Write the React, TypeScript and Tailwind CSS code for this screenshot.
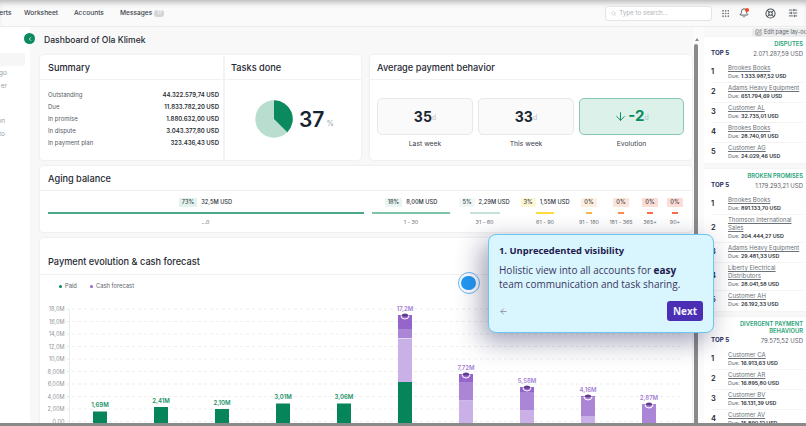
import {
  ArrowDown,
  ArrowLeft,
  Bell,
  ChevronLeft,
  Grip,
  LifeBuoy,
  Search,
  SlidersHorizontal,
  SquarePen,
} from "lucide-react";

const summaryRows = [
  ["Outstanding", "44.322.579,74 USD"],
  ["Due", "11.833.782,20 USD"],
  ["In promise", "1.880.632,00 USD"],
  ["In dispute", "3.043.377,80 USD"],
  ["In payment plan", "323.436,43 USD"],
];

const agingColumns = [
  { pct: "73%", amount: "32,5M USD", label: "...0", col: "ml-[7.5px] w-[316px]", bar: "w-full bg-[#4aa888]", badge: "bg-[#e2f2ec]" },
  { pct: "18%", amount: "8,00M USD", label: "1 - 30", col: "ml-[8.5px] w-[78px]", bar: "w-full bg-[#7cc4a6]", badge: "bg-[#e8f5f0]" },
  { pct: "5%", amount: "2,29M USD", label: "31 - 60", col: "ml-[9px] w-[51px]", bar: "w-[30px] bg-[#c3e3d6]", badge: "bg-[#f0f8f5]" },
  { pct: "3%", amount: "1,55M USD", label: "61 - 90", col: "ml-[10px] w-[50px]", bar: "w-[18px] bg-[#fbdc3c]", badge: "bg-[#fdf7d4]" },
  { pct: "0%", amount: "", label: "91 - 180", col: "ml-[7px] w-[24px]", bar: "w-[6px] bg-[#fdb44b]", badge: "bg-[#fdeedd]" },
  { pct: "0%", amount: "", label: "181 - 365", col: "ml-[7px] w-[26px]", bar: "w-[6px] bg-[#fb8c4a]", badge: "bg-[#fde4d9]" },
  { pct: "0%", amount: "", label: "365+", col: "ml-[3px] w-[26px]", bar: "w-[6px] bg-[#fb6a4a]", badge: "bg-[#fddcd6]" },
  { pct: "0%", amount: "", label: "90+", col: "ml-[-1px] w-[26px]", bar: "w-[6px] bg-[#fb6a4a]", badge: "bg-[#fddcd6]" },
];

const topLists = [
  {
    title: ["DISPUTES"],
    total: "2.071.287,59 USD",
    rows: [
      ["Brookes Books", "1.333.987,52 USD"],
      ["Adams Heavy Equipment", "651.794,69 USD"],
      ["Customer AL", "32.735,01 USD"],
      ["Brookes Books", "28.740,91 USD"],
      ["Customer AG", "24.029,46 USD"],
    ],
  },
  {
    title: ["BROKEN PROMISES"],
    total: "1.179.293,21 USD",
    rows: [
      ["Brookes Books", "891.133,70 USD"],
      ["Thomson International Sales", "204.444,27 USD"],
      ["Adams Heavy Equipment", "29.481,33 USD"],
      ["Liberty Electrical Distributors", "28.041,58 USD"],
      ["Customer AH", "26.192,33 USD"],
    ],
  },
  {
    title: ["DIVERGENT PAYMENT", "BEHAVIOUR"],
    total: "79.575,52 USD",
    rows: [
      ["Customer CA", "16.913,63 USD"],
      ["Customer AR", "16.895,80 USD"],
      ["Customer BV", "16.131,39 USD"],
      ["Customer AV", "15.890,12 USD"],
    ],
  },
];

const GREEN = "#07855a";
const DARK = "#9565cc";
const MID = "#ab86d6";
const LIGHT = "#c9b0e6";

// y values are in page coordinates, svg starts at page y=295
const bars = [
  { label: "1,69M", tone: GREEN, parts: [[411.5, 426, GREEN]] },
  { label: "2,41M", tone: GREEN, parts: [[407, 426, GREEN]] },
  { label: "2,10M", tone: GREEN, parts: [[409, 426, GREEN]] },
  { label: "3,01M", tone: GREEN, parts: [[403.5, 426, GREEN]] },
  { label: "3,06M", tone: GREEN, parts: [[403.5, 426, GREEN]] },
  { label: "17,2M", tone: DARK, parts: [[315, 329, DARK], [329, 338, MID], [338.5, 382, LIGHT], [382, 426, GREEN]] },
  { label: "7,72M", tone: DARK, parts: [[374, 382, DARK], [382, 400.5, MID], [400.5, 426, LIGHT]] },
  { label: "5,58M", tone: DARK, parts: [[387, 392, DARK], [392, 410, MID], [410, 426, LIGHT]] },
  { label: "4,16M", tone: DARK, parts: [[396, 397.5, DARK], [397.5, 416, MID], [416, 426, LIGHT]] },
  { label: "2,87M", tone: DARK, parts: [[404, 426, MID]] },
] as { label: string; tone: string; parts: [number, number, string][] }[];

const axis = ["18,0M", "16,0M", "14,0M", "12,0M", "10,0M", "8,00M", "6,00M", "4,00M", "2,00M", "0,00"];

function Chart() {
  const top = 295;
  return (
    <svg width="652" height="135" viewBox={`40 ${top} 652 135`} className="block">
      {axis.map((t, i) => {
        const y = 309 + i * 12.5;
        return (
          <g key={t}>
            <text x="64.5" y={y + 2.2} textAnchor="end" fontSize="5.6" fill="#8f949b" fontFamily="Inter, sans-serif">
              {t}
            </text>
            <line x1="66" x2="680" y1={y} y2={y} stroke="#e9e9e9" strokeWidth="0.8" strokeDasharray="3 3" />
          </g>
        );
      })}
      <line x1="69.5" x2="69.5" y1="309" y2="424" stroke="#e6e6e6" strokeWidth="0.8" />
      {bars.map((b, i) => {
        const x = 93 + i * 61;
        const barTop = b.parts[0][0];
        return (
          <g key={b.label}>
            <text
              x={x + 7}
              y={barTop - 4.5}
              textAnchor="middle"
              fontSize="6"
              fontWeight="600"
              fill={b.tone === GREEN ? "#1a9268" : "#a37fd6"}
              fontFamily="Inter, sans-serif"
            >
              {b.label}
            </text>
            {b.parts.map(([y1, y2, color]) => (
              <rect key={y1} x={x} y={y1} width="14" height={y2 - y1} fill={color} />
            ))}
            {b.tone !== GREEN && (
              <>
                <path d={`M${x + 3} ${barTop + 0.5} a4 3.5 0 0 0 8 0`} fill="none" stroke="#fff" strokeWidth="1" />
                <ellipse cx={x + 7} cy={barTop} rx="3" ry="1.6" fill="#5d3b8f" />
              </>
            )}
          </g>
        );
      })}
    </svg>
  );
}

function Sidebar() {
  return (
    <aside className="flex w-[30px] shrink-0 flex-col bg-white pt-[26px] text-[6.5px] text-[#9aa0a6]">
      <div className="h-[12.5px] w-[25px] rounded-r-[2px] bg-[#f6f6f6]" />
      <div className="mt-[2px] flex h-[13px] items-center justify-end pr-[23px]">go</div>
      <div className="flex h-[13px] items-center justify-end pr-[23px]">er</div>
      <div className="h-[22px]" />
      <div className="flex h-[13px] items-center justify-end pr-[25px]">on</div>
      <div className="flex h-[13px] items-center justify-end pr-[25px]">to</div>
    </aside>
  );
}

function CardTitle({ children, className }: { children: React.ReactNode; className?: string }) {
  return (
    <div className={`flex h-[25px] items-center border-b border-[#f1f1f1] pt-[1.5px] text-[9.2px] font-medium text-[#1f2933] ${className ?? ""}`}>
      {children}
    </div>
  );
}

function SummaryCard() {
  return (
    <div className="flex h-[105px] w-[321px] rounded-[4px] bg-white shadow-[0_0_3px_rgba(0,0,0,0.08)]">
      <div className="w-[185px] border-r-2 border-[#f3f3f3]">
        <CardTitle className="pl-[8px]">Summary</CardTitle>
        <div className="flex flex-col pl-[8px] pr-[4px] pt-[8.5px]">
          {summaryRows.map(([label, value]) => (
            <div key={label} className="flex h-[12px] items-center justify-between text-[6px]">
              <span className="text-[#555c64]">{label}</span>
              <span className="font-semibold text-[#2b3138]">{value}</span>
            </div>
          ))}
        </div>
      </div>
      <div className="flex-1">
        <CardTitle className="pl-[6px]">Tasks done</CardTitle>
        <div className="flex items-center pl-[30px] pt-[20px]">
          <svg width="38" height="38" viewBox="0 0 38 38">
            <circle cx="19" cy="19" r="18.7" fill="#b9decf" />
            <path d="M19 19 V0.3 A18.7 18.7 0 0 1 32.3 32.2 Z" fill="#0a8a5e" />
          </svg>
          <span className="ml-[6px] text-[21px] font-semibold leading-none text-[#152430]">37</span>
          <span className="ml-[2px] mt-[9px] text-[7.5px] text-[#a0a6ab]">%</span>
        </div>
      </div>
    </div>
  );
}

function PaymentBehaviorCard() {
  return (
    <div className="h-[105px] w-[322px] rounded-[4px] bg-white shadow-[0_0_3px_rgba(0,0,0,0.08)]">
      <CardTitle className="pl-[7px]">Average payment behavior</CardTitle>
      <div className="flex pl-[7px] pt-[18px]">
        <div className="flex w-[96px] flex-col items-center">
          <div className="flex h-[36.5px] w-full items-center justify-center rounded-[5px] border border-[#e8e8e8] bg-[#fafafa]">
            <span className="text-[14px] font-bold text-[#1c2730]">35</span>
            <span className="mt-[4px] text-[7px] text-[#c0c4c8]">d</span>
          </div>
          <span className="mt-[4px] text-[6.8px] text-[#3c444c]">Last week</span>
        </div>
        <div className="ml-[5px] flex w-[96px] flex-col items-center">
          <div className="flex h-[36.5px] w-full items-center justify-center rounded-[5px] border border-[#e8e8e8] bg-[#fafafa]">
            <span className="text-[14px] font-bold text-[#1c2730]">33</span>
            <span className="mt-[4px] text-[7px] text-[#c0c4c8]">d</span>
          </div>
          <span className="mt-[4px] text-[6.8px] text-[#3c444c]">This week</span>
        </div>
        <div className="ml-[5px] flex w-[105px] flex-col items-center">
          <div className="flex h-[37px] w-full items-center justify-center rounded-[5px] border-[1.5px] border-[#86c9ae] bg-[#dcf1e9]">
            <ArrowDown size={13} strokeWidth={1.8} className="text-[#0a8a5e]" />
            <span className="ml-[1px] text-[15px] font-bold text-[#0a8a5e]">-2</span>
            <span className="mt-[4px] text-[7px] text-[#a9c9bc]">d</span>
          </div>
          <span className="mt-[3.5px] text-[6.8px] text-[#3c444c]">Evolution</span>
        </div>
      </div>
    </div>
  );
}

function AgingCard() {
  return (
    <div className="mt-[6px] h-[66px] w-[652px] rounded-[4px] bg-white shadow-[0_0_3px_rgba(0,0,0,0.08)]">
      <CardTitle className="pl-[8px]">Aging balance</CardTitle>
      <div className="flex pt-[7px]">
        {agingColumns.map((c) => (
          <div key={c.label} className={`flex shrink-0 flex-col items-center ${c.col}`}>
            <div className="flex h-[9px] items-center gap-[4px] whitespace-nowrap text-[5.7px]">
              <span className={`flex h-[8.5px] items-center rounded-[1px] px-[3px] font-medium text-[#3c444c] ${c.badge}`}>
                {c.pct}
              </span>
              {c.amount && <span className="font-medium text-[#2b3138]">{c.amount}</span>}
            </div>
            <div className={`mt-[4.5px] h-[2.5px] ${c.bar}`} />
            <span className="mt-[3.5px] whitespace-nowrap text-[5.4px] leading-[8px] text-[#6b7178]">{c.label}</span>
          </div>
        ))}
      </div>
    </div>
  );
}

function ForecastCard() {
  return (
    <div className="mt-[6px] w-[652px] rounded-t-[4px] bg-white shadow-[0_0_3px_rgba(0,0,0,0.08)]">
      <div className="flex h-[37px] items-end border-b border-[#f1f1f1] pb-[5px] pl-[8px] text-[9.2px] font-medium leading-[14px] text-[#1f2933]">
        Payment evolution &amp; cash forecast
      </div>
      <div className="flex h-[20px] items-center pl-[19px] pt-[3px] text-[5.8px] text-[#5d646b]">
        <span className="h-[3px] w-[3px] rounded-full bg-[#07855a]" />
        <span className="ml-[3px]">Paid</span>
        <span className="ml-[13px] h-[3px] w-[3px] rounded-full bg-[#9565cc]" />
        <span className="ml-[3px]">Cash forecast</span>
      </div>
      <Chart />
    </div>
  );
}

function TopList({ list }: { list: (typeof topLists)[number] }) {
  return (
    <section className="mb-[6px] bg-white pl-[7px] pr-[3px] pt-[3px] shadow-[0_0_2px_rgba(0,0,0,0.06)]">
      <div className="text-right text-[5.8px] font-semibold leading-[7px] text-[#27a377]">
        {list.title.map((t) => (
          <div key={t}>{t}</div>
        ))}
      </div>
      <div className="mt-[2px] flex h-[9px] items-center justify-between">
        <span className="text-[6.2px] font-bold text-[#1c2a5c]">TOP 5</span>
        <span className="text-[6px] text-[#5d646b]">{list.total}</span>
      </div>
      <div className="mt-[5px]">
        {list.rows.map(([name, due], i) => (
          <div key={name + i} className="flex items-center border-b border-[#f3f3f3] py-[1.5px] last:border-b-transparent">
            <span className="w-[17px] shrink-0 text-[7.5px] font-semibold text-[#1f2933]">{i + 1}</span>
            <div className="min-w-0 flex-1">
              <div className="text-[6px] leading-[8px] text-[#6b7178] underline">{name}</div>
              <div className="whitespace-nowrap text-[5.3px] leading-[8px] text-[#6b7178]">
                Due: <span className="font-semibold text-[#2b3138]">{due}</span>
              </div>
            </div>
          </div>
        ))}
      </div>
    </section>
  );
}

function TopPanel() {
  return (
    <aside className="relative w-[102px] shrink-0 overflow-hidden bg-[#f8f8f8] pt-[9.5px]">
      <div className="absolute right-0 top-[0.5px] z-10 flex h-[9px] w-[54px] items-center gap-[2px] whitespace-nowrap rounded-l-[2px] bg-[#ececec] pl-[3px] text-[5.6px] text-[#5d646b]">
        <SquarePen size={7} className="shrink-0" />
        Edit page lay-out
      </div>
      {topLists.map((list) => (
        <TopList key={list.total} list={list} />
      ))}
    </aside>
  );
}

function Tour() {
  return (
    <>
      <div className="absolute left-[457.5px] top-[272px] flex h-[22px] w-[22px] items-center justify-center rounded-full border-[1.5px] border-[#6bb8f0] bg-white">
        <div className="h-[14.5px] w-[14.5px] rounded-full bg-[#2299f5]" />
      </div>
      <div className="absolute left-[488px] top-[234px] h-[99px] w-[226px] rounded-[8px] border-[1.5px] border-[#6cc5ef] bg-[#d9f5fe] pl-[10px] pr-[10px] pt-[9px] font-['Open_Sans',sans-serif] shadow-[-6px_8px_26px_rgba(40,40,90,0.45)]">
        <div className="text-[9.4px] font-bold leading-[14px] text-[#1f1a4d]">1. Unprecedented visibility</div>
        <p className="mt-[5px] text-[10px] leading-[14px] text-[#3a3560]">
          Holistic view into all accounts for <b className="text-[#1f1a4d]">easy</b>
          <br />
          team communication and task sharing.
        </p>
        <div className="mt-[10px] flex items-center justify-between">
          <ArrowLeft size={9} strokeWidth={2.4} className="text-[#8f92a8]" />
          <button className="h-[20px] w-[36px] rounded-[3px] bg-[#4a2fb5] text-[10px] font-bold text-[#f0eefc]">Next</button>
        </div>
      </div>
    </>
  );
}

export default function App() {
  return (
    <div className="relative flex h-[426px] w-[806px] flex-col overflow-hidden bg-[#f8f8f8] font-['Inter',sans-serif]">
      <header className="flex h-[27px] shrink-0 items-center border-b border-[#ececec] bg-[#fafafa] shadow-[inset_0_6px_6px_-4px_rgba(0,0,0,0.3)]">
        <nav className="flex items-center pt-[1px] text-[6.6px] font-medium text-[#3c444c]">
          <span className="ml-[-7px] w-[31px]">Alerts</span>
          <span className="w-[50px]">Worksheet</span>
          <span className="w-[46px]">Accounts</span>
          <span>Messages</span>
          <span className="ml-[2px] flex h-[7px] w-[10px] items-center justify-center rounded-[3px] bg-[#d4d4d4] text-[4.5px] text-white">17</span>
        </nav>
        <div className="ml-[441px] flex h-[15px] w-[107px] items-center rounded-[3px] border border-[#e4e4e4] bg-white pl-[5px] text-[6.2px] text-[#b0b4b9]">
          <Search size={5} className="mr-[3px]" />
          Type to search...
        </div>
        <Grip size={9} strokeWidth={2} className="ml-[9px] text-[#5d646b]" />
        <div className="relative ml-[9px]">
          <Bell size={10} className="text-[#3c444c]" />
          <span className="absolute right-[0px] top-0 h-[4px] w-[4px] rounded-full bg-[#ef4a24]" />
        </div>
        <LifeBuoy size={11} strokeWidth={2.2} className="ml-[15.5px] text-[#4a5058]" />
        <SlidersHorizontal size={10} className="ml-[12px] text-[#4a5058]" />
      </header>
      <div className="flex min-h-0 flex-1">
        <Sidebar />
        <main className="min-w-0 flex-1 overflow-hidden pl-[10px]">
          <div className="flex h-[28px] items-center pb-[1px] pl-[4px] text-[8.6px] font-medium text-[#1f2933]">
            Dashboard of Ola Klimek
          </div>
          <div className="flex gap-[9px]">
            <SummaryCard />
            <PaymentBehaviorCard />
          </div>
          <AgingCard />
          <ForecastCard />
        </main>
        <div className="w-[11px] shrink-0 bg-[#fbfbfb] pl-[1px] pt-[11px]">
          <div className="ml-[1px] h-0 w-0 border-x-[2px] border-b-[3px] border-x-transparent border-b-[#8a8a8a]" />
          <div className="mt-[3px] h-[380px] w-[4px] rounded-t-[2px] bg-[#8a8a8a]" />
        </div>
        <TopPanel />
      </div>
      <div className="h-[3px] shrink-0 bg-[#8a8a8a]" />
      <div className="absolute left-[24px] top-[33px] flex h-[11px] w-[11px] items-center justify-center rounded-full bg-[#0a8a5e]">
        <ChevronLeft size={6} strokeWidth={3} className="text-white" />
      </div>
      <Tour />
    </div>
  );
}
